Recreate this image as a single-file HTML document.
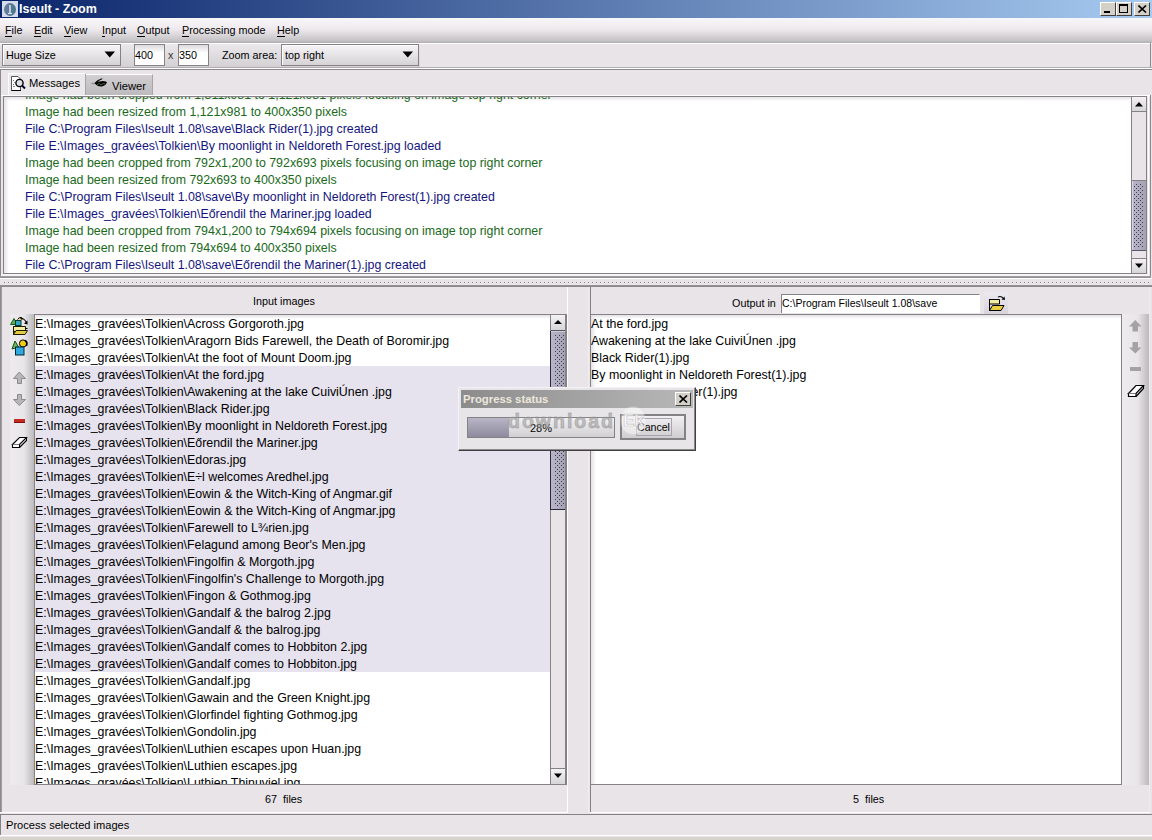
<!DOCTYPE html>
<html><head><meta charset="utf-8">
<style>
*{box-sizing:border-box;margin:0;padding:0}
html,body{width:1152px;height:840px;overflow:hidden;background:#e8e4e8;font-family:"Liberation Sans",sans-serif;font-size:10.8px;color:#000;position:relative}
.a{position:absolute}
.t{position:absolute;white-space:pre;line-height:14px}
.mi{font-size:10.8px;top:23px}
.mi u{text-decoration:none;border-bottom:1px solid #000}
.combo{border:1px solid #858285;background:linear-gradient(#f6f4f6,#d6d3d6);box-shadow:inset 1px 1px 0 #fff}
.tf{border:1px solid #858285;background:linear-gradient(#dcdadc,#fff 40%);}
.row{position:absolute;left:0;width:515px;height:17px;white-space:pre;font-size:12.38px;line-height:17px;padding-top:1px}
.sel{background:#e6e2ee}
.msg{position:absolute;left:21px;white-space:pre;font-size:12.38px;line-height:17px;padding-top:1px}
.g{color:#1a6a1a}
.b{color:#14147e}
.line{position:absolute}
.btn{position:absolute;background:linear-gradient(#f4f2f4,#d8d5d8)}
.strip{position:absolute;background:linear-gradient(to right,#eeebee,#e9e6e9 58%,#bcb9bc)}
</style></head><body>
<svg width="0" height="0" style="position:absolute">
 <defs>
  <pattern id="dots" x="0" y="0" width="4" height="4" patternUnits="userSpaceOnUse">
   <rect x="0" y="0" width="1" height="1" fill="#3a3a4e"/>
   <rect x="2" y="2" width="1" height="1" fill="#3a3a4e"/>
  </pattern>
  <linearGradient id="thumbg" x1="0" x2="1" y1="0" y2="0">
   <stop offset="0" stop-color="#b8b6c8"/><stop offset="1" stop-color="#a4a2b4"/>
  </linearGradient>
 </defs>
</svg>

<!-- ===== title bar ===== -->
<div class="a" style="left:0;top:0;width:1152px;height:18px;background:linear-gradient(to right,#0a246a 0%,#a6caf0 100%)"></div>
<div class="a" style="left:2px;top:1px;width:16px;height:16px;background:#d4daee"><div class="a" style="left:2px;top:2px;width:12px;height:13px;border-radius:50%;background:linear-gradient(to right,#6a80a0,#5a7890 50%,#4a7a88)"></div><div class="a" style="left:7px;top:4px;width:2px;height:9px;background:#b8cce8"></div><div class="a" style="left:6px;top:12px;width:4px;height:1px;background:#d8e4f4"></div></div>
<div class="t" style="left:19px;top:2px;color:#fff;font-weight:bold;font-size:12.5px">Iseult - Zoom</div>
<div class="a" style="left:1100px;top:2px;width:16px;height:14px;background:#d4d0c8;border:1px solid;border-color:#fff #404040 #404040 #fff"><div class="a" style="left:3px;top:8px;width:6px;height:2px;background:#000"></div></div>
<div class="a" style="left:1116px;top:2px;width:16px;height:14px;background:#d4d0c8;border:1px solid;border-color:#fff #404040 #404040 #fff"><div class="a" style="left:2px;top:1px;width:9px;height:9px;border:1px solid #000;border-top-width:2px"></div></div>
<div class="a" style="left:1134px;top:2px;width:16px;height:14px;background:#d4d0c8;border:1px solid;border-color:#fff #404040 #404040 #fff"><svg class="a" style="left:3px;top:2px" width="9" height="8"><path d="M0.5 0.5L8 7.5M8 0.5L0.5 7.5" stroke="#000" stroke-width="1.6"/></svg></div>

<!-- ===== menubar ===== -->
<div class="a" style="left:0;top:18px;width:1152px;height:25px;background:linear-gradient(#f8f6f8 0,#f2eef2 30%,#ebe7eb 48%,#d6d3d6 72%,#c4c1c4 92%,#aeabae 100%)"></div>
<div class="t mi" style="left:5px"><u>F</u>ile</div>
<div class="t mi" style="left:34px"><u>E</u>dit</div>
<div class="t mi" style="left:64px"><u>V</u>iew</div>
<div class="t mi" style="left:102px"><u>I</u>nput</div>
<div class="t mi" style="left:137px"><u>O</u>utput</div>
<div class="t mi" style="left:182px"><u>P</u>rocessing mode</div>
<div class="t mi" style="left:277px"><u>H</u>elp</div>

<!-- ===== toolbar ===== -->
<div class="line" style="left:0;top:43px;width:1152px;height:1px;background:#fff"></div>
<div class="a" style="left:0;top:44px;width:420px;height:23px;background:linear-gradient(#ebe8eb,#d4d1d4)"></div>
<div class="line" style="left:1150px;top:43px;width:1px;height:25px;background:#8c898c"></div>
<div class="line" style="left:0;top:67px;width:1152px;height:1px;background:#b0adb0"></div>
<div class="line" style="left:0;top:68px;width:1152px;height:1px;background:#fff"></div>
<div class="line" style="left:0;top:69px;width:1152px;height:1px;background:#8c898c"></div>

<div class="a combo" style="left:2px;top:44px;width:119px;height:22px"></div>
<div class="t" style="left:6px;top:48px">Huge Size</div>
<svg class="a" style="left:104px;top:51px" width="12" height="7"><path d="M0.5 0.5H11L5.75 6.5Z" fill="#000"/></svg>
<div class="a tf" style="left:134px;top:44px;width:31px;height:22px"></div>
<div class="t" style="left:135px;top:48px">400</div>
<div class="t" style="left:168px;top:48px;color:#333">x</div>
<div class="a tf" style="left:178px;top:44px;width:31px;height:22px"></div>
<div class="t" style="left:179px;top:48px">350</div>
<div class="t" style="left:222px;top:48px">Zoom area:</div>
<div class="a combo" style="left:281px;top:44px;width:138px;height:22px"></div>
<div class="t" style="left:285px;top:48px">top right</div>
<svg class="a" style="left:402px;top:51px" width="12" height="7"><path d="M0.5 0.5H11L5.75 6.5Z" fill="#000"/></svg>

<!-- ===== tabs ===== -->
<div class="line" style="left:0;top:70px;width:1px;height:208px;background:#8c898c"></div>
<div class="a" style="left:86px;top:74px;width:67px;height:21px;background:linear-gradient(#d2cfd2,#bdbabd);border-top:1px solid #fff;border-right:1px solid #a8a5a8"></div>
<div class="t" style="left:112px;top:79px;font-size:11.2px">Viewer</div>
<svg class="a" style="left:91px;top:77px" width="17" height="11">
 <path d="M3 6.5 Q6 2.5 11 1.2 L11.5 2 Q7 3.5 5 6.5 Z" fill="#000"/>
 <path d="M3.5 6.5 Q6 4 9 4.5 Q12 3.5 16 5 Q15 8.5 11 9.5 Q7 10 3.5 6.5Z" fill="#000"/>
 <path d="M6 8 L8 6.5 L10 8 L12 6.5 L14 7" stroke="#5a7a5a" stroke-width="0.8" fill="none"/>
 <path d="M0.5 6.5 H3.5" stroke="#888" stroke-width="1.2"/>
</svg>
<div class="a" style="left:8px;top:73px;width:78px;height:23px;background:#ebe8eb;border-top:1px solid #fff;border-left:1px solid #fff;border-right:1px solid #a8a5a8"></div>
<div class="t" style="left:29px;top:76px;font-size:11.2px">Messages</div>
<svg class="a" style="left:10px;top:75px" width="17" height="17">
 <path d="M1.5 1.5 H8 L10.5 4 V15.5 H1.5 Z" fill="#fff" stroke="#555" stroke-width="1"/>
 <path d="M1.5 15.5 H11" stroke="#000" stroke-width="1"/>
 <rect x="3" y="5" width="1" height="1" fill="#777"/><rect x="3" y="9" width="1" height="1" fill="#777"/><rect x="4" y="7" width="1" height="1" fill="#999"/><rect x="3" y="11" width="2" height="1" fill="#888"/>
 <circle cx="9.5" cy="8" r="3.6" fill="#dde2e6" stroke="#000" stroke-width="1.4"/>
 <path d="M12 10.5 L15 13.5" stroke="#000030" stroke-width="2"/>
</svg>

<!-- ===== message area ===== -->
<div class="line" style="left:1px;top:95px;width:1149px;height:1px;background:#fff"></div>
<div class="line" style="left:1150px;top:95px;width:1px;height:183px;background:#8c898c"></div>
<div class="line" style="left:1148px;top:96px;width:1px;height:180px;background:#fff"></div>
<div class="line" style="left:1px;top:274px;width:1148px;height:2px;background:#f6f4f6"></div>
<div class="line" style="left:0;top:276px;width:1151px;height:2px;background:linear-gradient(#a8a5a8,#8c898c)"></div>
<div class="a" style="left:3px;top:96px;width:1144px;height:178px;background:linear-gradient(#e4e1e4,rgba(255,255,255,0) 4px),linear-gradient(to right,#e6e3e6,#fff 5px);border:1px solid #858285;overflow:hidden">
  <div class="a" style="left:0;top:-11px">
<div class="msg g" style="top:0px">Image had been cropped from 1,311x981 to 1,121x981 pixels focusing on image top right corner</div>
<div class="msg g" style="top:17px">Image had been resized from 1,121x981 to 400x350 pixels</div>
<div class="msg b" style="top:34px">File C:\Program Files\Iseult 1.08\save\Black Rider(1).jpg created</div>
<div class="msg b" style="top:51px">File E:\Images_gravées\Tolkien\By moonlight in Neldoreth Forest.jpg loaded</div>
<div class="msg g" style="top:68px">Image had been cropped from 792x1,200 to 792x693 pixels focusing on image top right corner</div>
<div class="msg g" style="top:85px">Image had been resized from 792x693 to 400x350 pixels</div>
<div class="msg b" style="top:102px">File C:\Program Files\Iseult 1.08\save\By moonlight in Neldoreth Forest(1).jpg created</div>
<div class="msg b" style="top:119px">File E:\Images_gravées\Tolkien\Eőrendil the Mariner.jpg loaded</div>
<div class="msg g" style="top:136px">Image had been cropped from 794x1,200 to 794x694 pixels focusing on image top right corner</div>
<div class="msg g" style="top:153px">Image had been resized from 794x694 to 400x350 pixels</div>
<div class="msg b" style="top:170px">File C:\Program Files\Iseult 1.08\save\Eőrendil the Mariner(1).jpg created</div>
  </div>
</div>
<!-- message scrollbar -->
<div class="a" style="left:1131px;top:96px;width:16px;height:178px;background:#e8e4e8;border:1px solid #858285"></div>
<div class="btn" style="left:1132px;top:97px;width:14px;height:15px;border-bottom:1px solid #858285"></div>
<svg class="a" style="left:1134px;top:101px" width="10" height="6"><path d="M1 5.5H9L5 1Z" fill="#000"/></svg>
<svg class="a" style="left:1132px;top:180px" width="14" height="71">
 <rect x="0" y="0" width="14" height="71" fill="url(#thumbg)"/>
 <rect x="0" y="0" width="14" height="1" fill="#858285"/>
 <rect x="0" y="70" width="14" height="1" fill="#585668"/>
 <rect x="0" y="1" width="1" height="69" fill="#d8d6e4"/>
 <rect x="2" y="4" width="10" height="63" fill="url(#dots)"/>
</svg>
<div class="btn" style="left:1132px;top:258px;width:14px;height:15px;border-top:1px solid #858285"></div>
<svg class="a" style="left:1134px;top:263px" width="10" height="6"><path d="M1 0.5H9L5 5Z" fill="#000"/></svg>

<!-- ===== split divider ===== -->
<div class="line" style="left:0;top:278px;width:1152px;height:1px;background:#fff"></div>
<svg class="a" style="left:0;top:282px" width="1152" height="1"><defs><pattern id="hd" width="4" height="1" patternUnits="userSpaceOnUse"><rect x="0" y="0" width="1" height="1" fill="#8a878a"/></pattern></defs><rect x="4" y="0" width="1146" height="1" fill="url(#hd)"/></svg>
<div class="line" style="left:0;top:285px;width:1152px;height:2px;background:linear-gradient(#9a979a,#858285)"></div>

<!-- ===== lower left panel ===== -->
<div class="line" style="left:0;top:287px;width:2px;height:526px;background:linear-gradient(to right,#858285,#a8a5a8)"></div>
<div class="line" style="left:567px;top:287px;width:1px;height:526px;background:#fff"></div>
<div class="line" style="left:0;top:812px;width:568px;height:1px;background:#fff"></div>
<div class="t" style="left:253px;top:294px">Input images</div>
<div class="strip" style="left:10px;top:314px;width:24px;height:471px"></div>
<div class="a" style="left:34px;top:314px;width:533px;height:471px;background:linear-gradient(#e4e1e4,rgba(255,255,255,0) 4px),#fff;border:1px solid #858285;overflow:hidden">
  <div class="a" style="left:0;top:0">
<div class="row" style="top:0px">E:\Images_gravées\Tolkien\Across Gorgoroth.jpg</div>
<div class="row" style="top:17px">E:\Images_gravées\Tolkien\Aragorn Bids Farewell, the Death of Boromir.jpg</div>
<div class="row" style="top:34px">E:\Images_gravées\Tolkien\At the foot of Mount Doom.jpg</div>
<div class="row sel" style="top:51px">E:\Images_gravées\Tolkien\At the ford.jpg</div>
<div class="row sel" style="top:68px">E:\Images_gravées\Tolkien\Awakening at the lake CuiviÚnen .jpg</div>
<div class="row sel" style="top:85px">E:\Images_gravées\Tolkien\Black Rider.jpg</div>
<div class="row sel" style="top:102px">E:\Images_gravées\Tolkien\By moonlight in Neldoreth Forest.jpg</div>
<div class="row sel" style="top:119px">E:\Images_gravées\Tolkien\Eőrendil the Mariner.jpg</div>
<div class="row sel" style="top:136px">E:\Images_gravées\Tolkien\Edoras.jpg</div>
<div class="row sel" style="top:153px">E:\Images_gravées\Tolkien\E÷l welcomes Aredhel.jpg</div>
<div class="row sel" style="top:170px">E:\Images_gravées\Tolkien\Eowin &amp; the Witch-King of Angmar.gif</div>
<div class="row sel" style="top:187px">E:\Images_gravées\Tolkien\Eowin &amp; the Witch-King of Angmar.jpg</div>
<div class="row sel" style="top:204px">E:\Images_gravées\Tolkien\Farewell to L¾rien.jpg</div>
<div class="row sel" style="top:221px">E:\Images_gravées\Tolkien\Felagund among Beor's Men.jpg</div>
<div class="row sel" style="top:238px">E:\Images_gravées\Tolkien\Fingolfin &amp; Morgoth.jpg</div>
<div class="row sel" style="top:255px">E:\Images_gravées\Tolkien\Fingolfin's Challenge to Morgoth.jpg</div>
<div class="row sel" style="top:272px">E:\Images_gravées\Tolkien\Fingon &amp; Gothmog.jpg</div>
<div class="row sel" style="top:289px">E:\Images_gravées\Tolkien\Gandalf &amp; the balrog 2.jpg</div>
<div class="row sel" style="top:306px">E:\Images_gravées\Tolkien\Gandalf &amp; the balrog.jpg</div>
<div class="row sel" style="top:323px">E:\Images_gravées\Tolkien\Gandalf comes to Hobbiton 2.jpg</div>
<div class="row sel" style="top:340px">E:\Images_gravées\Tolkien\Gandalf comes to Hobbiton.jpg</div>
<div class="row" style="top:357px">E:\Images_gravées\Tolkien\Gandalf.jpg</div>
<div class="row" style="top:374px">E:\Images_gravées\Tolkien\Gawain and the Green Knight.jpg</div>
<div class="row" style="top:391px">E:\Images_gravées\Tolkien\Glorfindel fighting Gothmog.jpg</div>
<div class="row" style="top:408px">E:\Images_gravées\Tolkien\Gondolin.jpg</div>
<div class="row" style="top:425px">E:\Images_gravées\Tolkien\Luthien escapes upon Huan.jpg</div>
<div class="row" style="top:442px">E:\Images_gravées\Tolkien\Luthien escapes.jpg</div>
<div class="row" style="top:459px">E:\Images_gravées\Tolkien\Luthien Thinuviel.jpg</div>
  </div>
</div>
<!-- left scrollbar -->
<div class="a" style="left:550px;top:314px;width:16px;height:471px;background:#e8e4e8;border:1px solid #858285"></div>
<div class="btn" style="left:551px;top:315px;width:14px;height:16px;border-bottom:1px solid #585658"></div>
<svg class="a" style="left:553px;top:319px" width="10" height="6"><path d="M1 5H9L5 1Z" fill="#000"/></svg>
<svg class="a" style="left:551px;top:331px" width="14" height="179">
 <rect x="0" y="0" width="14" height="179" fill="url(#thumbg)"/>
 <rect x="0" y="178" width="14" height="1" fill="#2a2a3a"/>
 <rect x="0" y="0" width="14" height="1" fill="#d0cedc"/>
 <rect x="3" y="4" width="10" height="172" fill="url(#dots)"/>
</svg>
<div class="line" style="left:550px;top:331px;width:1px;height:179px;background:#2a2a3a"></div>
<div class="btn" style="left:551px;top:768px;width:14px;height:16px;border-top:1px solid #858285"></div>
<svg class="a" style="left:553px;top:773px" width="10" height="6"><path d="M1 0.5H9L5 5Z" fill="#000"/></svg>
<div class="t" style="left:265px;top:792px">67  files</div>

<!-- left toolbar icons -->
<svg class="a" style="left:8px;top:314px" width="24" height="140" viewBox="0 0 24 140">
 <!-- folder+shapes+arrow -->
 <path d="M2.5 10.5 L6 4.5 L9 10.5 Z" fill="#50b850" stroke="#1a5a1a" stroke-width="1"/>
 <path d="M9.5 5.5 Q11 3 13.5 3.5 L14 6" fill="#e8d870" stroke="#000" stroke-width="1"/>
 <rect x="7.5" y="6.5" width="5.5" height="5" fill="#30a8c8" stroke="#0a3a2a" stroke-width="1"/>
 <path d="M12 4 Q16 4 18.5 8.5" fill="none" stroke="#000" stroke-width="1.1"/>
 <path d="M16 9.5 L19.5 10.5 L19.5 6.5 Z" fill="#000"/>
 <path d="M5.5 12.5 H17.5 V17.5 H5.5 Z" fill="#f4ee9c" stroke="#1a1a00" stroke-width="1"/>
 <path d="M5.5 12.5 V20.5 H17 L19.5 16.5 H8 L5.5 20.5 Z" fill="#e4cc40" stroke="#1a1a00" stroke-width="1"/>
 <path d="M17.5 14.5 L19.5 14.5" stroke="#000" stroke-width="1"/>
 <!-- shapes -->
 <path d="M4 35 L7 27 L10.5 33 Z" fill="#6cbc5c" stroke="#1a4a1a" stroke-width="1"/>
 <circle cx="15" cy="29.5" r="3.6" fill="#f0cc10" stroke="#000" stroke-width="1"/>
 <path d="M17 26.5 Q20 28 18.5 32" fill="none" stroke="#000" stroke-width="1.5"/>
 <rect x="7.5" y="33" width="8.5" height="8" fill="#30a8e0" stroke="#002838" stroke-width="1"/>
 <!-- up arrow -->
 <path d="M11.3 58 L5.5 64.5 L9.5 64.5 L9.5 69.5 L13.5 69.5 L13.5 64.5 L17.5 64.5 Z" fill="#b8b6b8" stroke="#8c8a8c" stroke-width="1"/>
 <!-- down arrow -->
 <path d="M9.5 80.5 L13.5 80.5 L13.5 85.5 L17.5 85.5 L11.3 91.5 L5.5 85.5 L9.5 85.5 Z" fill="#b8b6b8" stroke="#8c8a8c" stroke-width="1"/>
 <!-- minus -->
 <rect x="6" y="105" width="11" height="4" fill="#c42a20"/>
 <rect x="6" y="108" width="11" height="1" fill="#7a1010"/>
 <!-- eraser -->
 <path d="M4.5 130.5 L11.5 123.5 L18.5 123.5 L11.5 130.5 Z" fill="#fff" stroke="#000" stroke-width="1.1"/>
 <path d="M4.5 130.5 V133.5 H11.5 V130.5" fill="#fff" stroke="#000" stroke-width="1.1"/>
 <path d="M11.5 133.5 L18.5 126.5 V123.5" fill="none" stroke="#000" stroke-width="1.1"/>
</svg>

<!-- ===== lower right panel ===== -->
<div class="line" style="left:590px;top:287px;width:1px;height:526px;background:#858285"></div>
<div class="line" style="left:588px;top:287px;width:1px;height:526px;background:#f0edf0"></div>
<div class="line" style="left:1149px;top:287px;width:1px;height:526px;background:#efecef"></div>
<div class="line" style="left:590px;top:812px;width:560px;height:1px;background:#fff"></div>
<div class="t" style="left:732px;top:296px">Output in</div>
<div class="a tf" style="left:781px;top:294px;width:199px;height:19px;background:#fff;border-right-color:#fff;border-bottom:none"></div>
<div class="t" style="left:782px;top:296px;font-size:10.5px">C:\Program Files\Iseult 1.08\save</div>
<div class="a" style="left:984px;top:292px;width:24px;height:22px;background:linear-gradient(#ece9f0,#d6d3da)"></div>
<svg class="a" style="left:984px;top:292px" width="24" height="22">
 <path d="M5.5 7.5 H15.5 V12 H5.5 Z" fill="#f4ee9c" stroke="#000" stroke-width="1"/>
 <path d="M5.5 7.5 V18.5 H17 L20 13.5 H8.5 L5.5 18.5 Z" fill="#e8d040" stroke="#000" stroke-width="1"/>
 <path d="M14 5 Q17 3.5 19.5 6.5" fill="none" stroke="#000" stroke-width="1.1"/>
 <path d="M17.5 7.5 L21 8 L20.5 4.5 Z" fill="#000"/>
</svg>
<div class="a" style="left:590px;top:314px;width:532px;height:471px;background:linear-gradient(#e4e1e4,rgba(255,255,255,0) 4px),linear-gradient(to right,#e4e1e4,#fff 5px);border:1px solid #858285;overflow:hidden">
  <div class="a" style="left:0;top:0">
<div class="row" style="top:0">At the ford.jpg</div>
<div class="row" style="top:17px">Awakening at the lake CuiviÚnen .jpg</div>
<div class="row" style="top:34px">Black Rider(1).jpg</div>
<div class="row" style="top:51px">By moonlight in Neldoreth Forest(1).jpg</div>
<div class="row" style="top:68px">Eőrendil the Mariner(1).jpg</div>
  </div>
</div>
<div class="strip" style="left:1122px;top:314px;width:27px;height:471px"></div>
<svg class="a" style="left:1122px;top:314px" width="27" height="90">
 <path d="M13.3 6 L7 12.5 H10.5 V17.5 H16 V12.5 H19.5 Z" fill="#a4a2a4"/>
 <path d="M10.5 28 H16 V33.5 H19.5 L13.3 39.5 L7 33.5 H10.5 Z" fill="#a4a2a4"/>
 <rect x="8" y="53" width="11" height="4" fill="#a4a2a4"/>
 <path d="M6.5 79.5 L14 71.5 H21.5 L14 79.5 Z" fill="#fff" stroke="#000" stroke-width="1.2"/>
 <path d="M6.5 79.5 V82.5 H14 V79.5" fill="#fff" stroke="#000" stroke-width="1.2"/>
 <path d="M14 82.5 L21.5 74.5 V71.5" fill="none" stroke="#000" stroke-width="1.2"/>
</svg>
<div class="t" style="left:853px;top:792px">5  files</div>

<!-- ===== status bar ===== -->
<div class="line" style="left:0;top:814px;width:1152px;height:1px;background:#858285"></div>
<div class="line" style="left:0;top:815px;width:1px;height:20px;background:#858285"></div>
<div class="line" style="left:0;top:835px;width:1152px;height:1px;background:#fff"></div>
<div class="t" style="left:6px;top:818px;font-size:11.1px">Process selected images</div>
<div class="a" style="left:0;top:837px;width:1152px;height:3px;background:#d6d2cc"></div>

<!-- ===== progress dialog ===== -->
<div class="a" style="left:458px;top:387px;width:238px;height:64px;background:#e8e5e8;border:1px solid;border-color:#f4f2f4 #404040 #404040 #f4f2f4;box-shadow:inset -1px -1px 0 #8c898c"></div>
<div class="a" style="left:461px;top:390px;width:232px;height:18px;background:linear-gradient(to right,#8c8c8c,#b8b8b8)"></div>
<div class="t" style="left:463px;top:392px;color:#ece8dc;font-weight:bold;font-size:11.3px">Progress status</div>
<div class="a" style="left:675px;top:392px;width:16px;height:14px;background:#d4d0c8;border:1px solid;border-color:#fff #404040 #404040 #fff"><svg class="a" style="left:3px;top:2px" width="9" height="8"><path d="M0.5 0.5L8 7.5M8 0.5L0.5 7.5" stroke="#000" stroke-width="1.6"/></svg></div>
<div class="a" style="left:467px;top:417px;width:148px;height:21px;background:linear-gradient(#f2f0f2,#d2cfd2);border:1px solid #858285"></div>
<div class="a" style="left:468px;top:418px;width:41px;height:19px;background:linear-gradient(#b8b6c6,#8c8a9c)"></div>
<div class="t" style="left:530px;top:421px;font-size:11px">28%</div>
<div class="a" style="left:620px;top:414px;width:66px;height:26px;background:linear-gradient(#f2f0f2,#d0cdd0);border:2px solid #858285"></div>
<div class="a" style="left:636px;top:418px;width:36px;height:18px;border:1px solid #a8a5b0"></div>
<div class="t" style="left:637px;top:420px;font-size:10.6px">Cancel</div>
<div class="t" style="left:508px;top:411px;line-height:20px;font-weight:bold;font-size:19.5px;color:rgba(150,150,150,0.55);-webkit-text-stroke:0.9px rgba(150,150,150,0.55);letter-spacing:2px">download</div>
<div class="a" style="left:621px;top:407px;width:24px;height:27px;border-radius:50%;background:rgba(255,255,255,0.45);box-shadow:0 0 2px rgba(255,255,255,0.5)"></div>
<div class="t" style="left:623px;top:411px;line-height:20px;font-weight:bold;font-size:17px;color:rgba(255,255,255,0.75);-webkit-text-stroke:0.7px rgba(150,150,150,0.55)">Ek</div>
</body></html>
